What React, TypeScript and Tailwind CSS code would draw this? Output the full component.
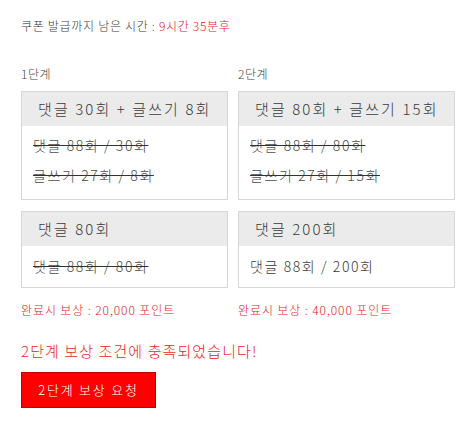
import React from "react";

const font = { fontFamily: '"Noto Sans CJK KR", "Noto Sans", sans-serif' };

function StageBox({
  header,
  lines,
  strike,
  width,
}: {
  header: string;
  lines: string[];
  strike: boolean;
  width: string;
}) {
  return (
    <div className={`${width} border border-[#d6d6d6] bg-white`}>
      <div className="h-[34px] flex items-center pl-[16px] bg-[#ebebeb] text-[15px] tracking-[2.1px] text-[#3a3a3a]">
        {header}
      </div>
      <div className={lines.length > 1 ? "pt-[4px] pb-[9px]" : "pt-[5px] pb-[6px]"}>
        {lines.map((l) => (
          <div
            key={l}
            className={`h-[30px] leading-[30px] pl-[11px] text-[14px] tracking-[1.6px] ${
              strike ? "line-through decoration-[#333] text-[#4a4a4a]" : "text-[#3a3a3a]"
            }`}
          >
            {l}
          </div>
        ))}
      </div>
    </div>
  );
}

export default function App() {
  return (
    <div className="w-[468px] h-[423px] bg-white pl-[21px] pt-[18px] font-light" style={font}>
      <div className="text-[12px] leading-[16px] tracking-[0.7px] text-[#3a3a3a]">
        쿠폰 발급까지 남은 시간 : <span className="text-[#e8141a]">9시간 35분후</span>
      </div>

      <div className="mt-[32px] flex gap-[10px]">
        <div className="w-[207px] flex flex-col">
          <div className="text-[12px] leading-[16px] tracking-[0.5px] text-[#444] mb-[9px]">1단계</div>
          <StageBox
            width="w-[207px]"
            header="댓글 30회 + 글쓰기 8회"
            lines={["댓글 88회 / 30회", "글쓰기 27회 / 8회"]}
            strike
          />
          <div className="mt-[11px]">
            <StageBox width="w-[207px]" header="댓글 80회" lines={["댓글 88회 / 80회"]} strike />
          </div>
          <div className="mt-[14px] text-[12px] leading-[16px] tracking-[0.9px] text-[#e8141a]">
            완료시 보상 : 20,000 포인트
          </div>
        </div>
        <div className="w-[217px] flex flex-col">
          <div className="text-[12px] leading-[16px] tracking-[0.5px] text-[#444] mb-[9px]">2단계</div>
          <StageBox
            width="w-[217px]"
            header="댓글 80회 + 글쓰기 15회"
            lines={["댓글 88회 / 80회", "글쓰기 27회 / 15회"]}
            strike
          />
          <div className="mt-[11px]">
            <StageBox width="w-[217px]" header="댓글 200회" lines={["댓글 88회 / 200회"]} strike={false} />
          </div>
          <div className="mt-[14px] text-[12px] leading-[16px] tracking-[0.9px] text-[#e8141a]">
            완료시 보상 : 40,000 포인트
          </div>
        </div>
      </div>

      <div className="mt-[23px] text-[15px] leading-[20px] tracking-[1.1px] text-[#ee1c24]">
        2단계 보상 조건에 충족되었습니다!
      </div>
      <button className="mt-[11px] w-[135px] h-[36px] bg-[#ff0000] border border-[#c40000] text-white text-[13px] tracking-[1.8px] flex items-center justify-center">
        2단계 보상 요청
      </button>
    </div>
  );
}
